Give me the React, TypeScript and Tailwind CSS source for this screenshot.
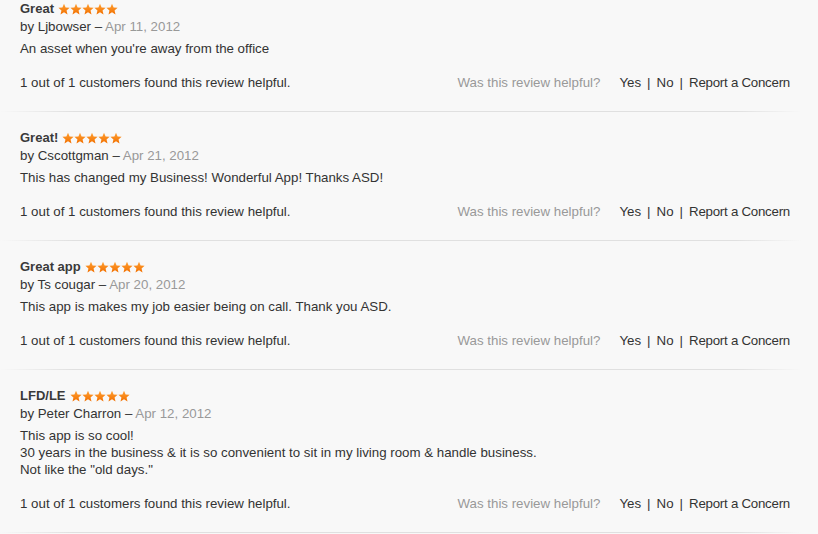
import React from "react";

type Review = { title: string; author: string; date: string; body: string[] };

const reviews: Review[] = [
  { title: "Great", author: "Ljbowser", date: "Apr 11, 2012", body: ["An asset when you're away from the office"] },
  { title: "Great!", author: "Cscottgman", date: "Apr 21, 2012", body: ["This has changed my Business! Wonderful App! Thanks ASD!"] },
  { title: "Great app", author: "Ts cougar", date: "Apr 20, 2012", body: ["This app is makes my job easier being on call. Thank you ASD."] },
  {
    title: "LFD/LE",
    author: "Peter Charron",
    date: "Apr 12, 2012",
    body: [
      "This app is so cool!",
      "30 years in the business & it is so convenient to sit in my living room & handle business.",
      'Not like the "old days."',
    ],
  },
];

function Star() {
  return (
    <svg width="12" height="12" viewBox="0 0 24 24" className="block">
      <defs>
        <linearGradient id="sg" x1="0" y1="0" x2="0" y2="1">
          <stop offset="0" stopColor="#ffa033" />
          <stop offset="1" stopColor="#f27000" />
        </linearGradient>
      </defs>
      <path
        d="M12 1.5l3.2 7.4 8 .7-6.1 5.3 1.9 7.9L12 18.6l-7 4.2 1.9-7.9L.8 9.6l8-.7z"
        fill="url(#sg)"
      />
    </svg>
  );
}

function Stars() {
  return (
    <span className="inline-flex items-center gap-0 ml-[4px]">
      <Star />
      <Star />
      <Star />
      <Star />
      <Star />
    </span>
  );
}

function ReviewItem({ r, first }: { r: Review; first: boolean }) {
  return (
    <div className={first ? "pt-0" : "pt-[17px]"}>
      <div className="pl-5 pr-7">
        <div className="flex items-center h-[18px] text-[13px] font-bold text-[#3a3a3a]">
          <span>{r.title}</span>
          <Stars />
        </div>
        <div className="h-[18px] leading-[18px] text-[13.3px] text-[#333]">
          by {r.author} – <span className="text-[#999]">{r.date}</span>
        </div>
        <div className="mt-[4px] text-[13.3px] leading-[17px] text-[#333]">
          {r.body.map((b, i) => (
            <div key={i}>{b}</div>
          ))}
        </div>
        <div className="mt-[17px] flex items-center justify-between text-[13.3px] leading-[17px] text-[#333]">
          <span>1 out of 1 customers found this review helpful.</span>
          <span className="flex items-center">
            <span className="text-[#999] mr-[19px]">Was this review helpful?</span>
            <span>Yes</span>
            <span className="mx-[6px]">|</span>
            <span>No</span>
            <span className="mx-[6px]">|</span>
            <span className="tracking-[-0.25px]">Report a Concern</span>
          </span>
        </div>
      </div>
      <div className="mt-[20px] h-px bg-[linear-gradient(to_right,rgba(220,220,220,0)_0%,#e0e0e0_9%,#e0e0e0_90%,rgba(220,220,220,0)_98%)]" />
    </div>
  );
}

export default function App() {
  return (
    <div
      className="w-[818px] h-[534px] overflow-hidden bg-[#f8f8f8]"
      style={{ fontFamily: '"Liberation Sans", Arial, sans-serif' }}
    >
      {reviews.map((r, i) => (
        <ReviewItem key={i} r={r} first={i === 0} />
      ))}
    </div>
  );
}
